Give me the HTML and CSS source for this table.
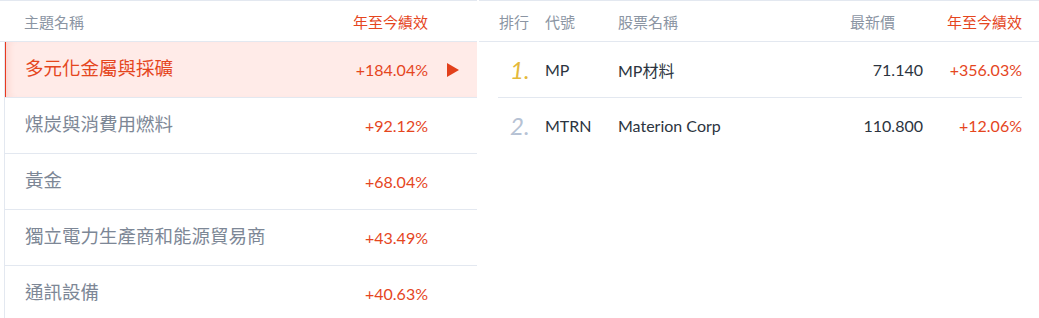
FILE: index.html
```html
<!DOCTYPE html>
<html lang="zh-Hant">
<head>
<meta charset="utf-8">
<link rel="stylesheet" href="styles.css">
</head>
<body>
<div class="wrap">
  <section class="themes">
    <div class="thead">
      <span class="th-name">主題名稱</span>
      <span class="th-perf">年至今績效</span>
    </div>
    <ul class="tlist">
      <li class="trow active"><span class="tname">多元化金屬與採礦</span><span class="tpct">+184.04%</span><span class="tarrow"><svg width="12" height="14" viewBox="0 0 12 14"><polygon points="0,0 12,7 0,14" fill="#e2401b"/></svg></span></li>
      <li class="trow"><span class="tname">煤炭與消費用燃料</span><span class="tpct">+92.12%</span><span class="tarrow"></span></li>
      <li class="trow"><span class="tname">黃金</span><span class="tpct">+68.04%</span><span class="tarrow"></span></li>
      <li class="trow"><span class="tname">獨立電力生產商和能源貿易商</span><span class="tpct">+43.49%</span><span class="tarrow"></span></li>
      <li class="trow"><span class="tname">通訊設備</span><span class="tpct">+40.63%</span><span class="tarrow"></span></li>
    </ul>
  </section>
  <section class="stocks">
    <div class="shead">
      <span class="c-rank">排行</span>
      <span class="c-code">代號</span>
      <span class="c-name">股票名稱</span>
      <span class="c-price">最新價</span>
      <span class="c-perf up">年至今績效</span>
    </div>
    <div class="srow">
      <span class="c-rank rank gold">1.</span>
      <span class="c-code">MP</span>
      <span class="c-name">MP材料</span>
      <span class="c-price">71.140</span>
      <span class="c-perf up">+356.03%</span>
    </div>
    <div class="srow last">
      <span class="c-rank rank silver">2.</span>
      <span class="c-code">MTRN</span>
      <span class="c-name">Materion Corp</span>
      <span class="c-price">110.800</span>
      <span class="c-perf up">+12.06%</span>
    </div>
  </section>
</div>
</body>
</html>
```
FILE: styles.css
```css
html, body {
  margin: 0;
  padding: 0;
  background: #ffffff;
}
body {
  font-family: Lato, "Noto Sans CJK TC", sans-serif;
  color: #2c3440;
  height: 318px;
  overflow: hidden;
}
.wrap {
  display: flex;
  gap: 2px;
}
.themes {
  width: 477px;
  flex: none;
  border-top: 1px solid #e3e8f0;
}
.thead {
  height: 40px;
  display: flex;
  align-items: center;
  justify-content: space-between;
  padding: 0 49px 0 24px;
  font-size: 15px;
  color: #8b95a3;
  border-bottom: 1px solid #e3e8f0;
}
.th-perf, .up {
  color: #e5461e;
}
.tlist {
  list-style: none;
  margin: 0 0 0 4px;
  padding: 0;
  border-left: 1px solid #e3e8f0;
}
.trow {
  height: 55px;
  display: flex;
  align-items: center;
  padding-left: 20px;
  border-bottom: 1px solid #e3e8f0;
}
.trow.active {
  background: #ffebe8;
  box-shadow: inset 1px 0 0 #e8391f, inset 8px 0 8px -6px rgba(232, 57, 31, 0.18);
}
.tname {
  flex: 1;
  font-size: 18.5px;
  color: #7d8796;
  margin-bottom: 5px;
}
.active .tname {
  color: #e5461e;
}
.tpct {
  font-size: 16px;
  color: #e5461e;
}
.tarrow {
  width: 49px;
  flex: none;
  display: flex;
  align-items: center;
  padding-left: 19px;
  box-sizing: border-box;
}
.tarrow svg {
  display: block;
}
.stocks {
  flex: 1;
  border-top: 1px solid #e3e8f0;
}
.shead, .srow {
  display: grid;
  grid-template-columns: 46px 73px 1fr 90px 99px;
  align-items: center;
}
.shead {
  height: 40px;
  padding: 0 17px 0 20px;
  font-size: 15px;
  color: #8b95a3;
  border-bottom: 1px solid #e3e8f0;
}
.srow {
  height: 55px;
  margin: 0 17px 0 19px;
  padding-left: 1px;
  font-size: 16px;
  border-bottom: 1px solid #e3e8f0;
}
.srow.last {
  border-bottom: none;
}
.c-price, .c-perf {
  text-align: right;
}
.shead .c-price {
  margin-right: 28px;
}
.srow .c-price {
  color: #2c3440;
}
.rank {
  font-style: italic;
  font-size: 24px;
  padding-left: 11px;
  line-height: 1;
}
.gold {
  color: #e4b93a;
}
.silver {
  color: #b6c2d4;
}
```
